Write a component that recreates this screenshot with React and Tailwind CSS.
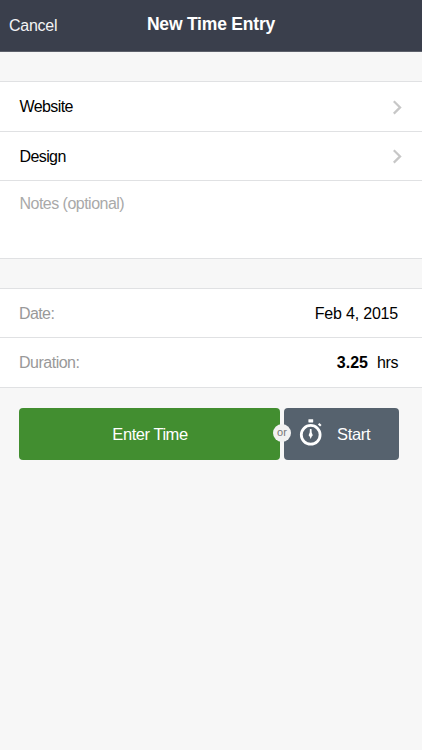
function Chevron() {
  return (
    <svg className="mr-[19px] h-[16px] w-[11px] shrink-0" viewBox="0 0 11 16" fill="none">
      <path d="M1.8 2.2 L8.1 8.4 L1.8 14.6" stroke="#c7c7c7" strokeWidth="2.2" />
    </svg>
  );
}

function Stopwatch() {
  return (
    <svg className="h-[30px] w-[26px] shrink-0" viewBox="0 0 26 30">
      <circle cx="12.7" cy="15.8" r="9.4" fill="none" stroke="#fff" strokeWidth="2.8" />
      <rect x="10.4" y="0.2" width="4.8" height="3.2" rx="0.4" fill="#fff" />
      <path d="M20.6 4.8 L22.8 6.8" stroke="#fff" strokeWidth="2.2" />
      <path d="M11.9 10 h1.6 l0.2 3.6 l1.1 2.6 l-1.2 1.6 l-0.9 2.2 l-0.9 -2.2 l-1.2 -1.6 l1.1 -2.6 z" fill="#fff" />
    </svg>
  );
}

export default function App() {
  return (
    <div className="flex h-[750px] w-[422px] flex-col bg-[#f7f7f7] font-['Liberation_Sans',Arial,sans-serif] text-[16px] leading-[20px] text-black">
      <header className="grid h-[52px] grid-cols-[1fr_auto_1fr] border-b border-[#5d616b] bg-[#3a3f4c] text-white">
        <button className="h-[36px] pl-[9px] pt-[16px] text-left text-[16px] leading-[20px] tracking-[-0.25px] text-[#f4f4f6]">Cancel</button>
        <h1 className="pt-[14px] text-[17.5px] font-bold leading-[20px] tracking-[-0.2px]">New Time Entry</h1>
      </header>

      <section className="mt-[29px] border-y border-[#e0e1e3] bg-white">
        <div className="flex h-[50px] items-center justify-between border-b border-[#e0e1e3] pl-[19.5px]">
          <span className="pt-[1px] tracking-[-0.6px]">Website</span>
          <Chevron />
        </div>
        <div className="flex h-[49px] items-center justify-between border-b border-[#e0e1e3] pl-[19.5px]">
          <span className="pt-[2px] tracking-[-0.6px]">Design</span>
          <Chevron />
        </div>
        <div className="h-[77px] pl-[19.5px] pt-[13px] tracking-[-0.52px] text-[#a9a9a9]">Notes (optional)</div>
      </section>

      <section className="mt-[29px] border-y border-[#e0e1e3] bg-white">
        <div className="flex h-[49px] items-center justify-between border-b border-[#e0e1e3] pl-[19px] pr-[24px]">
          <span className="pt-[2px] tracking-[-0.6px] text-[#999]">Date:</span>
          <span className="pt-[2px] tracking-[-0.2px]">Feb 4, 2015</span>
        </div>
        <div className="flex h-[49px] items-center justify-between pl-[19px] pr-[24px]">
          <span className="pt-[1px] tracking-[-0.5px] text-[#999]">Duration:</span>
          <span className="flex gap-[9px]">
            <b>3.25</b>
            <span className="tracking-[-0.4px]">hrs</span>
          </span>
        </div>
      </section>

      <div className="relative ml-[19px] mt-[20px] flex h-[52px] w-[380px] gap-[4px] text-[16.5px] text-white">
        <button className="w-[261px] rounded-[4px] bg-[#428e30] pl-[1px] tracking-[-0.45px]">Enter Time</button>
        <button className="flex flex-1 items-center rounded-[4px] bg-[#56626e] pl-[14px]">
          <Stopwatch />
          <span className="ml-[13px] tracking-[-0.3px]">Start</span>
        </button>
        <span className="absolute left-[254px] top-[16px] flex h-[18px] w-[18px] items-center justify-center rounded-full bg-[#f2f2f2] pb-[1px] text-[11px] leading-none text-[#777]">
          or
        </span>
      </div>
    </div>
  );
}
